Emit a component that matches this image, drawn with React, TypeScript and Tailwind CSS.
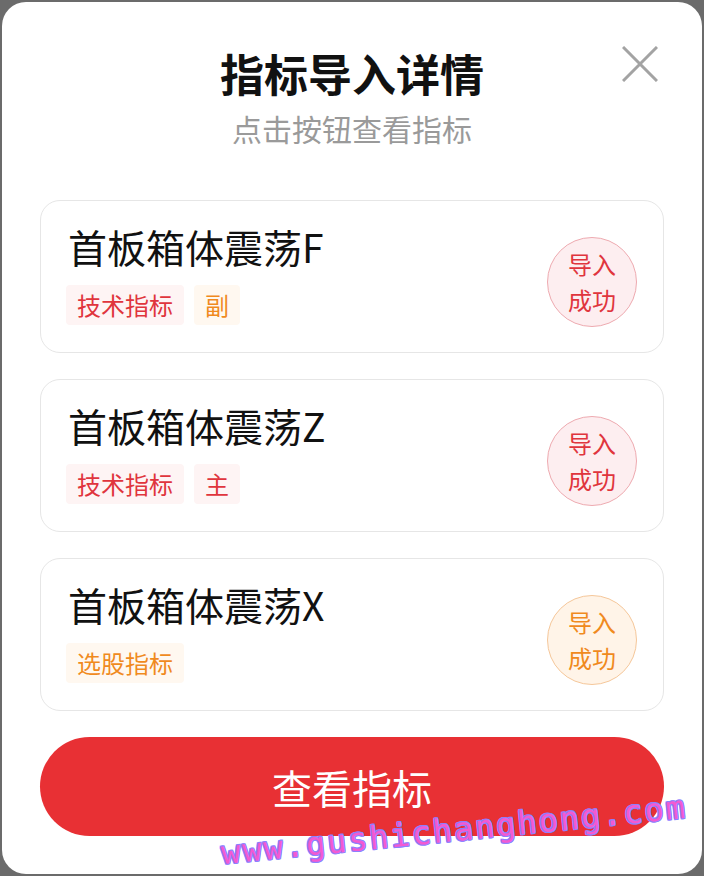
const cn = '[font-family:"Noto_Sans_CJK_SC","Noto_Sans",sans-serif]';

type Tag = { text: string; tone: 'red' | 'orange' };
type Item = { name: string; tags: Tag[]; tone: 'red' | 'orange' };

const items: Item[] = [
  { name: '首板箱体震荡F', tags: [{ text: '技术指标', tone: 'red' }, { text: '副', tone: 'orange' }], tone: 'red' },
  { name: '首板箱体震荡Z', tags: [{ text: '技术指标', tone: 'red' }, { text: '主', tone: 'red' }], tone: 'red' },
  { name: '首板箱体震荡X', tags: [{ text: '选股指标', tone: 'orange' }], tone: 'orange' },
];

function TagChip({ tag }: { tag: Tag }) {
  const color = tag.tone === 'red' ? 'bg-[#fef4f4] text-[#e0353d]' : 'bg-[#fff8f0] text-[#f08a1e]';
  return (
    <span className={`${color} h-[40px] px-[11px] text-[24px] leading-[40px] rounded-[4px]`}>{tag.text}</span>
  );
}

function Badge({ tone }: { tone: 'red' | 'orange' }) {
  const color =
    tone === 'red'
      ? 'bg-[#fdeef0] border-[#eeaab0] text-[#e0353d]'
      : 'bg-[#fff4e8] border-[#f5c79a] text-[#f08a1e]';
  return (
    <div className={`${color} mt-[36px] w-[90px] h-[90px] rounded-full border flex flex-col items-center justify-center text-[24px] leading-[36px]`}>
      <span>导入</span>
      <span>成功</span>
    </div>
  );
}

function Card({ item }: { item: Item }) {
  return (
    <div className="h-[153px] border border-[#e6e6e6] rounded-[20px] pl-[25px] pr-[26px] flex items-start justify-between">
      <div className="flex flex-col pt-[22px]">
        <div className="pl-[2px] text-[39px] leading-[46px] text-[#111]">{item.name}</div>
        <div className="mt-[16px] flex gap-[10px]">
          {item.tags.map((t) => (
            <TagChip key={t.text} tag={t} />
          ))}
        </div>
      </div>
      <Badge tone={item.tone} />
    </div>
  );
}

export default function App() {
  return (
    <div className={`relative w-[704px] h-[876px] bg-[#6b6b6b] p-[2px] overflow-hidden ${cn}`}>
      <div className="relative h-full bg-white rounded-[24px] px-[38px] pt-[45px] pb-[38px] flex flex-col">
        <button className="absolute top-[44px] right-[44px] w-[36px] h-[36px]">
          <svg viewBox="0 0 36 36" width="36" height="36">
            <path d="M1 1 L35 35 M35 1 L1 35" stroke="#a3a3a3" strokeWidth="3" fill="none" />
          </svg>
        </button>
        <h1 className="text-center text-[44px] leading-[52px] font-bold text-[#111]">指标导入详情</h1>
        <p className="mt-[11px] text-center text-[30px] leading-[36px] text-[#9a9a9a]">点击按钮查看指标</p>
        <div className="mt-[54px] flex flex-col gap-[26px]">
          {items.map((it) => (
            <Card key={it.name} item={it} />
          ))}
        </div>
        <button className="mt-[26px] h-[99px] w-full rounded-full bg-[#e83034] text-white text-[40px] leading-[50px]">
          查看指标
        </button>
      </div>
      <div className="absolute left-[220px] top-[818px] w-[468px] h-[24px] rotate-[-5.7deg] text-[32px] leading-[24px] tracking-[2px] text-[#f25ad2] whitespace-nowrap [font-family:'DejaVu_Sans_Mono',monospace] [text-shadow:1px_0_0_#8c80ff,-1px_0_0_#8c80ff,0_1px_0_#8c80ff,0_-1px_0_#8c80ff,1px_1px_0_#8c80ff,-1px_-1px_0_#8c80ff,1px_-1px_0_#8c80ff,-1px_1px_0_#8c80ff]">
        www.gushichanghong.com
      </div>
    </div>
  );
}
